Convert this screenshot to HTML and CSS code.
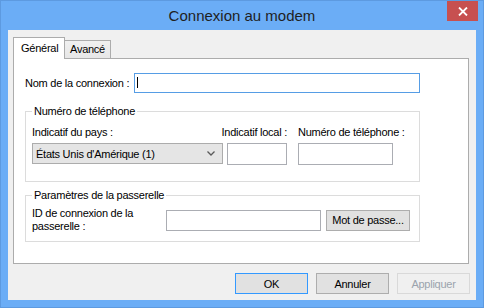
FILE: index.html
```html
<!DOCTYPE html>
<html lang="fr">
<head>
	<meta charset="UTF-8">
	<meta name="viewport" content="width=device-width, initial-scale=1.0">
	<title>Connexion au modem</title>
	<link rel="stylesheet" href="styles.css">
</head>
<body>
	<div class="window">
		<div class="titlebar">
			<span class="title">Connexion au modem</span>
			<button class="close" type="button">
				<svg width="10" height="9" viewBox="0 0 10 9">
					<path d="M1 0.5 L9 8.5 M9 0.5 L1 8.5" stroke="#fff" stroke-width="1.8" fill="none" />
				</svg>
			</button>
		</div>
		<div class="client">
			<div class="tabs">
				<div class="tab tab-active">Général</div>
				<div class="tab tab-idle">Avancé</div>
			</div>
			<div class="panel">
				<div class="name-row">
					<label class="name-label">Nom de la connexion :</label>
					<div class="edit edit-name"><span class="caret"></span></div>
				</div>

				<fieldset class="group">
					<legend>Numéro de téléphone</legend>
					<div class="phone-fields">
						<div class="col col-country">
							<label>Indicatif du pays :</label>
							<div class="combo">
								<span>États Unis d'Amérique (1)</span>
								<svg width="8" height="5" viewBox="0 0 8 5">
									<path d="M0.5 0.5 L4 4 L7.5 0.5" stroke="#5a5a5a" stroke-width="1.3" fill="none" />
								</svg>
							</div>
						</div>
						<div class="col col-local">
							<label>Indicatif local :</label>
							<div class="edit edit-full"></div>
						</div>
						<div class="col col-number">
							<label>Numéro de téléphone :</label>
							<div class="edit edit-full"></div>
						</div>
					</div>
				</fieldset>

				<fieldset class="group group-gateway">
					<legend>Paramètres de la passerelle</legend>
					<div class="gateway">
						<label class="gateway-label">ID de connexion de la passerelle :</label>
						<div class="edit edit-id"></div>
						<button class="btn btn-small" type="button">Mot de passe...</button>
					</div>
				</fieldset>
			</div>
			<div class="actions">
				<button class="btn btn-default" type="button">OK</button>
				<button class="btn" type="button">Annuler</button>
				<button class="btn btn-disabled" type="button" disabled>Appliquer</button>
			</div>
		</div>
	</div>
</body>
</html>
```
FILE: styles.css
```css
body {
	margin: 0;
	font-family: "Liberation Sans", Arial, sans-serif;
	font-size: 11px;
	letter-spacing: -0.25px;
	color: #000;
}

.window {
	width: 484px;
	height: 308px;
	box-sizing: border-box;
	border: 1px solid #5d9ae0;
	background: #6badf6;
	display: flex;
	flex-direction: column;
}

.titlebar {
	height: 29px;
	display: grid;
	grid-template-columns: 1fr auto 1fr;
	padding: 0 5px;
}

.title {
	grid-column: 2;
	font-size: 15px;
	line-height: 29px;
	letter-spacing: 0;
	color: #1f1f1f;
}

.close {
	grid-column: 3;
	justify-self: end;
	width: 31px;
	height: 20px;
	border: none;
	padding: 0;
	background: #c75050;
	display: flex;
	align-items: center;
	justify-content: center;
}

.client {
	flex: 1;
	margin: 0 7px 7px;
	padding: 7px 7px 0 5px;
	background: #f0f0f0;
}

.tabs {
	display: flex;
	align-items: flex-end;
	height: 21px;
}

.tab {
	box-sizing: border-box;
	border: 1px solid #acacac;
	border-bottom: none;
}

.tab-active {
	width: 52px;
	height: 22px;
	margin-bottom: -1px;
	padding-left: 7px;
	line-height: 20px;
	background: #fff;
	position: relative;
	z-index: 1;
}

.tab-idle {
	width: 46px;
	height: 18px;
	border-left: none;
	padding-left: 5px;
	line-height: 17px;
	background: linear-gradient(#f0f0f0, #e7e7e7);
}

.panel {
	width: 456px;
	height: 206px;
	box-sizing: border-box;
	border: 1px solid #acacac;
	background: #fff;
	padding: 14px 11px 0;
}

.name-row {
	display: flex;
	align-items: center;
}

.name-label {
	width: 109px;
}

.edit {
	box-sizing: border-box;
	height: 22px;
	border: 1px solid #abadb3;
	background: #fff;
}

.edit-name {
	width: 286px;
	height: 20px;
	border-color: #569de5;
	padding: 3px 2px;
}

.caret {
	display: block;
	width: 1px;
	height: 11px;
	background: #000;
}

.group {
	width: 395px;
	min-width: 0;
	box-sizing: border-box;
	margin: 11px 0 0;
	padding: 0;
	border: 1px solid #dcdcdc;
}

.group legend {
	margin-left: 6px;
	padding: 0 2px;
	line-height: 14px;
}

.group-gateway {
	margin-top: 6px;
}

.phone-fields {
	display: flex;
	padding: 7px 0 16px 6px;
}

.col {
	display: flex;
	flex-direction: column;
	gap: 4px;
}

.col label {
	line-height: 14px;
	white-space: nowrap;
}

.col-country {
	width: 191px;
}

.col-local {
	width: 60px;
	margin-left: 4px;
	align-items: flex-end;
}

.col-number {
	width: 95px;
	margin-left: 11px;
}

.edit-full {
	width: 100%;
}

.combo {
	box-sizing: border-box;
	height: 21px;
	border: 1px solid #acacac;
	background: #e5e5e5;
	display: flex;
	align-items: center;
	justify-content: space-between;
	padding: 0 7px 0 3px;
}

.gateway {
	display: flex;
	align-items: center;
	padding: 5px 0 8px 6px;
}

.gateway-label {
	width: 126px;
	line-height: 13px;
}

.edit-id {
	width: 155px;
	height: 21px;
	margin-left: 8px;
}

.btn {
	width: 73px;
	height: 21px;
	box-sizing: border-box;
	border: 1px solid #adadad;
	background: #e1e1e1;
	padding: 0;
	font: inherit;
	letter-spacing: inherit;
	color: #000;
}

.btn-small {
	width: 84px;
	margin-left: 5px;
}

.btn-default {
	border-color: #3399ff;
}

.btn-disabled {
	background: #f0f0f0;
	border-color: #d9d9d9;
	color: #9ba3ad;
}

.actions {
	display: flex;
	justify-content: flex-end;
	gap: 8px;
	margin: 9px -1px 0 0;
}
```
